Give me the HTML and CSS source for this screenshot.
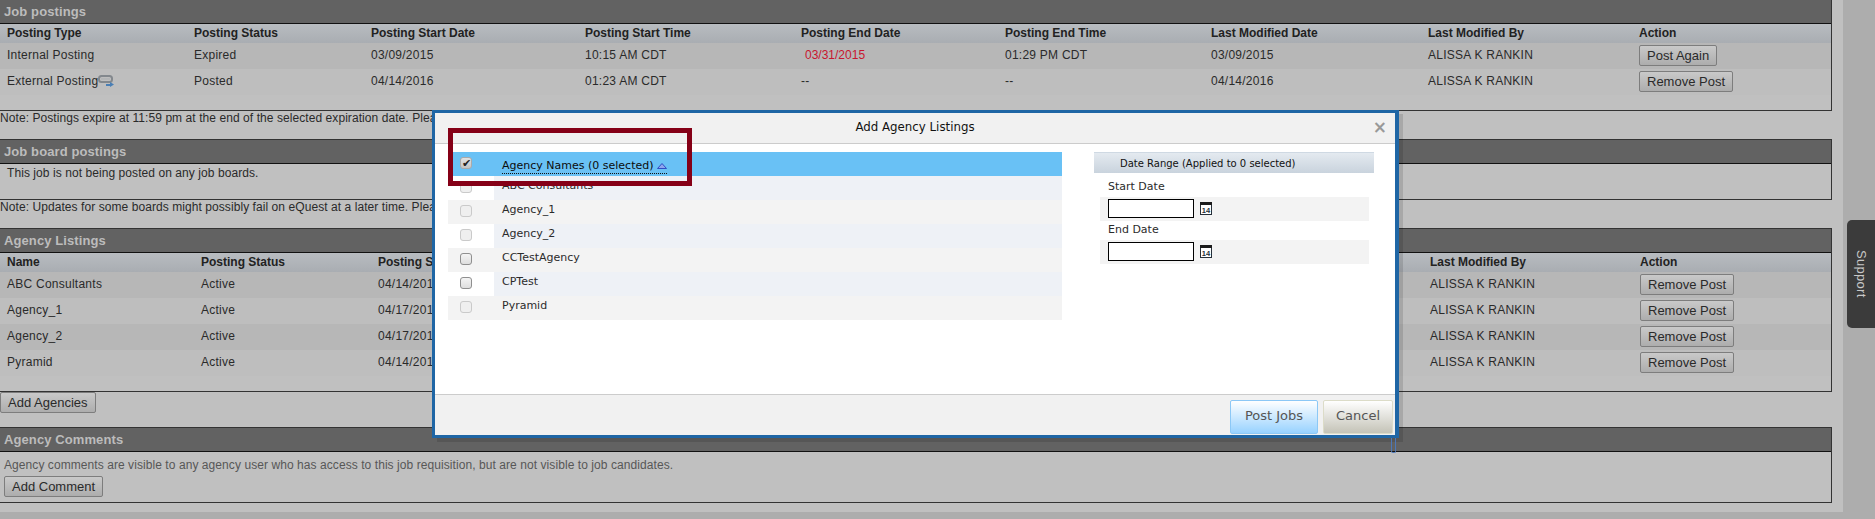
FILE: index.html
```html
<!DOCTYPE html>
<html lang="en">
<head>
    <meta charset="UTF-8">
    <title>Add Agency Listings</title>
    <link rel="stylesheet" href="styles.css">
</head>
<body>
    <div class="content">
        <section class="panel panel-first">
            <h2>Job postings</h2>
            <table class="grid postings">
                <colgroup>
                    <col class="p1"><col class="p2"><col class="p3"><col class="p4"><col class="p5"><col class="p6"><col class="p7"><col class="p8"><col>
                </colgroup>
                <thead>
                    <tr><th>Posting Type</th><th>Posting Status</th><th>Posting Start Date</th><th>Posting Start Time</th><th>Posting End Date</th><th>Posting End Time</th><th>Last Modified Date</th><th>Last Modified By</th><th>Action</th></tr>
                </thead>
                <tbody>
                    <tr>
                        <td>Internal Posting</td><td>Expired</td><td>03/09/2015</td><td>10:15 AM CDT</td>
                        <td><span class="expired">03/31/2015</span></td><td>01:29 PM CDT</td><td>03/09/2015</td><td>ALISSA K RANKIN</td>
                        <td><button class="btn">Post Again</button></td>
                    </tr>
                    <tr>
                        <td>External Posting<svg class="net-icon" width="16" height="12" viewBox="0 0 16 12"><rect x="1" y="1" width="13" height="6" rx="2.5" fill="none" stroke="#83888d" stroke-width="2"/><path d="M3 4h9" stroke="#a9adb0"/><path d="M8 9h4V7l4 2.5-4 2.5v-1H8z" fill="#4a7fb5"/></svg></td>
                        <td>Posted</td><td>04/14/2016</td><td>01:23 AM CDT</td><td>--</td><td>--</td><td>04/14/2016</td><td>ALISSA K RANKIN</td>
                        <td><button class="btn">Remove Post</button></td>
                    </tr>
                </tbody>
            </table>
        </section>
        <p class="note">Note: Postings expire at 11:59 pm at the end of the selected expiration date. Please</p>

        <section class="panel">
            <h2>Job board postings</h2>
            <p class="empty">This job is not being posted on any job boards.</p>
        </section>
        <p class="note">Note: Updates for some boards might possibly fail on eQuest at a later time. Please</p>

        <section class="panel panel-agency">
            <h2>Agency Listings</h2>
            <table class="grid agencies">
                <colgroup>
                    <col class="a1"><col class="a2"><col class="a3"><col class="a4"><col class="a5"><col>
                </colgroup>
                <thead>
                    <tr><th>Name</th><th>Posting Status</th><th>Posting Start Date</th><th></th><th>Last Modified By</th><th>Action</th></tr>
                </thead>
                <tbody>
                    <tr><td>ABC Consultants</td><td>Active</td><td>04/14/2016</td><td></td><td>ALISSA K RANKIN</td><td><button class="btn">Remove Post</button></td></tr>
                    <tr><td>Agency_1</td><td>Active</td><td>04/17/2016</td><td></td><td>ALISSA K RANKIN</td><td><button class="btn">Remove Post</button></td></tr>
                    <tr><td>Agency_2</td><td>Active</td><td>04/17/2016</td><td></td><td>ALISSA K RANKIN</td><td><button class="btn">Remove Post</button></td></tr>
                    <tr><td>Pyramid</td><td>Active</td><td>04/14/2016</td><td></td><td>ALISSA K RANKIN</td><td><button class="btn">Remove Post</button></td></tr>
                </tbody>
            </table>
        </section>
        <button class="btn btn-add">Add Agencies</button>

        <section class="panel panel-comments">
            <h2>Agency Comments</h2>
            <p class="hint">Agency comments are visible to any agency user who has access to this job requisition, but are not visible to job candidates.</p>
            <button class="btn btn-comment">Add Comment</button>
        </section>
    </div>

    <div class="support">Support</div>

    <div class="modal">
        <div class="modal-head">
            <span>Add Agency Listings</span>
            <span class="close">&#215;</span>
        </div>
        <div class="modal-body">
            <div class="list">
                <div class="list-row list-head">
                    <span class="box-cell"><input type="checkbox" class="check" checked></span>
                    <span class="name-cell"><a class="sort">Agency Names (0 selected) <svg width="10" height="6" viewBox="0 0 10 6"><path d="M5 0.5l4.5 5H0.5z" fill="#8fa6ee" stroke="#2f4fc4"/></svg></a></span>
                </div>
                <div class="list-row list-odd">
                    <span class="box-cell"><input type="checkbox" class="check" disabled></span>
                    <span class="name-cell">ABC Consultants</span>
                </div>
                <div class="list-row list-even">
                    <span class="box-cell"><input type="checkbox" class="check" disabled></span>
                    <span class="name-cell">Agency_1</span>
                </div>
                <div class="list-row list-odd">
                    <span class="box-cell"><input type="checkbox" class="check" disabled></span>
                    <span class="name-cell">Agency_2</span>
                </div>
                <div class="list-row list-even">
                    <span class="box-cell"><input type="checkbox" class="check"></span>
                    <span class="name-cell">CCTestAgency</span>
                </div>
                <div class="list-row list-odd">
                    <span class="box-cell"><input type="checkbox" class="check"></span>
                    <span class="name-cell">CPTest</span>
                </div>
                <div class="list-row list-even">
                    <span class="box-cell"><input type="checkbox" class="check" disabled></span>
                    <span class="name-cell">Pyramid</span>
                </div>
            </div>
            <div class="dates">
                <div class="dates-head">Date Range (Applied to 0 selected)</div>
                <div class="date-label">Start Date</div>
                <div class="date-row">
                    <input type="text" class="date-input">
                    <svg class="cal-icon" width="12" height="13" viewBox="0 0 12 13"><rect x="0.5" y="1.5" width="11" height="11" fill="#fff" stroke="#26303a"/><rect x="0" y="0" width="12" height="3" fill="#1c1c1c"/><text x="6" y="10.5" text-anchor="middle" class="cal-day">14</text></svg>
                </div>
                <div class="date-label date-label-end">End Date</div>
                <div class="date-row">
                    <input type="text" class="date-input">
                    <svg class="cal-icon" width="12" height="13" viewBox="0 0 12 13"><rect x="0.5" y="1.5" width="11" height="11" fill="#fff" stroke="#26303a"/><rect x="0" y="0" width="12" height="3" fill="#1c1c1c"/><text x="6" y="10.5" text-anchor="middle" class="cal-day">14</text></svg>
                </div>
            </div>
        </div>
        <div class="modal-foot">
            <button class="foot-btn foot-post">Post Jobs</button>
            <button class="foot-btn foot-cancel">Cancel</button>
        </div>
    </div>
    <div class="callout"></div>
    <div class="stub"></div>
</body>
</html>
```

FILE: styles.css
```css
html, body {
    margin: 0;
    height: 519px;
    overflow: hidden;
}
body {
    position: relative;
    background-color: #adadad;
    font-family: "Liberation Sans", Arial, sans-serif;
    font-size: 12px;
    letter-spacing: 0.07px;
    color: #2a2a2a;
}
.content {
    width: 1832px;
    height: 512px;
    padding-right: 11px;
    background-color: #c0c0c0;
    overflow: hidden;
}
.panel {
    box-sizing: border-box;
    border-top: 1px solid #333;
    border-right: 1px solid #333;
    border-bottom: 1px solid #333;
}
.panel-first {
    height: 111px;
    border-top: none;
}
h2 {
    margin: 0;
    height: 23px;
    padding-left: 4px;
    line-height: 24px;
    font-size: 13px;
    letter-spacing: 0.1px;
    color: #bcbcbc;
    background-color: #626262;
    border-bottom: 1px solid #111;
    box-sizing: content-box;
}
.grid {
    width: 100%;
    table-layout: fixed;
    border-collapse: collapse;
}
.grid th {
    height: 19px;
    padding: 0 0 2px 7px;
    box-sizing: border-box;
    text-align: left;
    font-size: 12px;
    letter-spacing: 0;
    color: #222;
    background: linear-gradient(#b8bcc0, #a9adb2);
}
.grid td {
    height: 26px;
    padding: 0 0 2px 7px;
    box-sizing: border-box;
    white-space: nowrap;
    letter-spacing: 0.25px;
    background-color: #bebebe;
}
.grid tbody tr:nth-child(odd) td {
    background-color: #b7b7b7;
}
.p1 { width: 187px; }
.p2 { width: 177px; }
.p3 { width: 214px; }
.p4 { width: 216px; }
.p5 { width: 204px; }
.p6 { width: 206px; }
.p7 { width: 217px; }
.p8 { width: 211px; }
.a1 { width: 194px; }
.a2 { width: 177px; }
.a3 { width: 200px; }
.a4 { width: 852px; }
.a5 { width: 210px; }
.grid td .expired {
    padding-left: 4px;
    color: #c8162e;
    letter-spacing: 0;
}
.net-icon {
    vertical-align: -2px;
}
.btn {
    height: 21px;
    padding: 0 7px;
    display: block;
    font-family: "Liberation Sans", Arial, sans-serif;
    font-size: 13px;
    letter-spacing: 0;
    color: #2a2a2a;
    background: linear-gradient(#c9c9c9, #adadad);
    border: 1px solid #7d7d7d;
    border-radius: 2px;
}
.grid td .btn {
    margin-top: 1px;
}
.note {
    margin: 0;
    height: 28px;
    line-height: 14px;
}
.empty {
    margin: 0;
    height: 35px;
    padding: 2px 0 0 7px;
    box-sizing: border-box;
    line-height: 14px;
}
.panel-agency {
    height: 164px;
}
.btn-add {
    margin-bottom: 14px;
}
.panel-comments {
    height: 76px;
}
.hint {
    margin: 0;
    padding: 6px 0 4px 4px;
    line-height: 14px;
    color: #575757;
}
.btn-comment {
    margin-left: 4px;
}
.support {
    position: absolute;
    top: 220px;
    right: 0;
    width: 28px;
    height: 108px;
    box-sizing: border-box;
    writing-mode: vertical-rl;
    text-align: center;
    line-height: 28px;
    font-size: 13px;
    letter-spacing: 0.3px;
    color: #c8c8c8;
    background-color: #3b3b3b;
    border-radius: 5px 0 0 5px;
}
.modal {
    position: absolute;
    top: 110px;
    left: 432px;
    width: 960px;
    height: 322px;
    display: flex;
    flex-direction: column;
    background-color: #fff;
    border: 3px solid #1f66a5;
    box-shadow: 1px 0 0 #1f66a5, 5px 4px 0 rgba(0, 0, 0, 0.12);
    font-family: "DejaVu Sans", Tahoma, sans-serif;
    font-size: 11px;
    letter-spacing: 0;
    color: #2b2b2b;
}
.modal-head {
    flex: none;
    position: relative;
    height: 30px;
    font-size: 11.8px;
    line-height: 29px;
    text-align: center;
    color: #111;
    background-color: #f1f1f1;
    border-bottom: 1px solid #ccc;
}
.close {
    position: absolute;
    right: 8px;
    top: 0;
    font-size: 17px;
    font-weight: bold;
    color: #999;
}
.modal-body {
    flex: 1;
    display: flex;
    gap: 32px;
    padding: 8px 21px 0 13px;
}
.list {
    width: 614px;
}
.list-row {
    display: flex;
    height: 24px;
}
.box-cell {
    flex: none;
    width: 46px;
    padding-left: 12px;
    box-sizing: border-box;
}
.name-cell {
    flex: 1;
    padding-left: 8px;
    line-height: 19px;
}
.list-head {
    background-color: #69c1f5;
    color: #0c0c0c;
}
.list-head .name-cell {
    padding-top: 7px;
    box-sizing: border-box;
    line-height: 14px;
}
.sort {
    display: inline-block;
    line-height: 14px;
    border-bottom: 1px dotted #111;
}
.list-odd .name-cell {
    background-color: #eef1f6;
}
.list-even {
    background-color: #f3f3f3;
}
.check {
    appearance: none;
    position: relative;
    width: 12px;
    height: 12px;
    margin: 5px 0 0;
    display: block;
    box-sizing: border-box;
    background: linear-gradient(#f4f4f4, #dedede);
    border: 1px solid #8f8f8f;
    border-radius: 3px;
}
.check:disabled {
    background: #efefef;
    border-color: #cacaca;
}
.check:checked {
    background: linear-gradient(#e2e2e2, #c4c4c4);
    border-color: #aaa;
}
.check:checked::after {
    content: "\2714";
    position: absolute;
    left: 1px;
    top: -1px;
    font-size: 11px;
    line-height: 12px;
    color: #222;
}
.dates {
    width: 280px;
}
.dates-head {
    height: 21px;
    padding-left: 26px;
    box-sizing: border-box;
    line-height: 22px;
    font-size: 10px;
    color: #111;
    background: linear-gradient(#e4eaf0, #c9d3dd);
    border-top: 1px solid #cfd9e3;
}
.date-label {
    height: 24px;
    padding-left: 14px;
    line-height: 27px;
}
.date-label-end {
    height: 19px;
    line-height: 18px;
}
.date-row {
    display: flex;
    align-items: center;
    gap: 6px;
    height: 19px;
    margin: 0 5px 0 6px;
    padding: 2px 0 3px 8px;
    background-color: #f3f3f3;
}
.date-input {
    width: 86px;
    height: 19px;
    padding: 0;
    box-sizing: border-box;
    background-color: #fff;
    border: 1px solid #000;
}
.cal-day {
    font-family: "Liberation Sans", Arial, sans-serif;
    font-size: 7.5px;
    font-weight: bold;
    fill: #26303a;
}
.modal-foot {
    flex: none;
    display: flex;
    justify-content: flex-end;
    align-items: flex-end;
    gap: 5px;
    height: 39px;
    padding: 0 2px 1px 0;
    background-color: #f1f1f1;
    border-top: 1px solid #ccc;
}
.foot-btn {
    height: 34px;
    padding: 0 0 3px;
    font-family: "DejaVu Sans", Tahoma, sans-serif;
    font-size: 13px;
    color: #555;
    border-radius: 2px;
}
.foot-post {
    width: 88px;
    background: linear-gradient(#fff, #98d2ff);
    border: 1px solid #8cc8f6;
}
.foot-cancel {
    width: 70px;
    background: linear-gradient(#fff, #c4c3b7);
    border: 1px solid #dcdcc8;
}
.callout {
    position: absolute;
    top: 128px;
    left: 448px;
    width: 234px;
    height: 48px;
    border: 5px solid #850017;
}
.stub {
    position: absolute;
    top: 438px;
    left: 1391px;
    width: 3px;
    height: 14px;
    border: 1px solid #4d78b8;
    border-top: none;
    border-radius: 0 0 2px 2px;
}
```
